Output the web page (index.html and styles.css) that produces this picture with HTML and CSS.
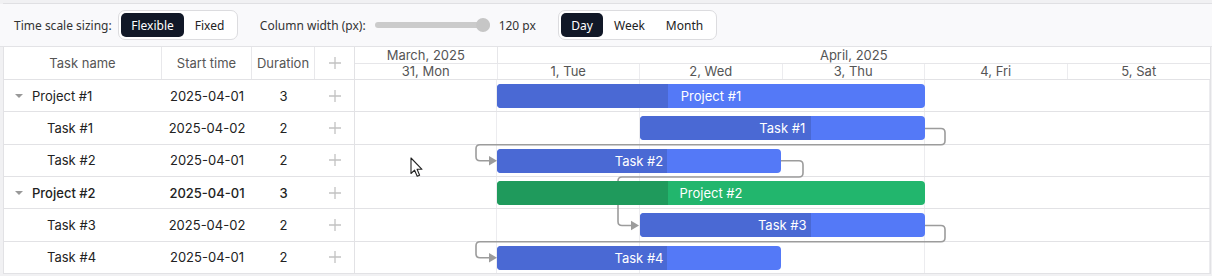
FILE: index.html
```html
<!DOCTYPE html>
<html lang="en">
<head>
  <meta charset="UTF-8" />
  <title>Gantt - time scale sizing</title>
  <link rel="stylesheet" href="styles.css">
</head>
<body>
  <div class="wrap">
    <div class="toolbar">
      <span class="label">Time scale sizing:</span>
      <div class="seg">
        <button class="on">Flexible</button>
        <button>Fixed</button>
      </div>
      <span class="label gap">Column width (px):</span>
      <div class="slider"><span class="thumb"></span></div>
      <span class="value">120 px</span>
      <div class="seg">
        <button class="on">Day</button>
        <button>Week</button>
        <button>Month</button>
      </div>
    </div>

    <div class="gantt">
      <div class="grid">
        <div class="grid-head">
          <div class="c name">Task name</div>
          <div class="c">Start time</div>
          <div class="c">Duration</div>
          <div class="c"><svg class="plus" viewBox="0 0 12 12"><path d="M6 0 V12 M0 6 H12" /></svg></div>
        </div>
        <div class="grid-row project">
          <div class="c name"><i class="caret"></i>Project #1</div>
          <div class="c">2025-04-01</div><div class="c">3</div>
          <div class="c"><svg class="plus" viewBox="0 0 12 12"><path d="M6 0 V12 M0 6 H12" /></svg></div>
        </div>
        <div class="grid-row">
          <div class="c name task">Task #1</div>
          <div class="c">2025-04-02</div><div class="c">2</div>
          <div class="c"><svg class="plus" viewBox="0 0 12 12"><path d="M6 0 V12 M0 6 H12" /></svg></div>
        </div>
        <div class="grid-row">
          <div class="c name task">Task #2</div>
          <div class="c">2025-04-01</div><div class="c">2</div>
          <div class="c"><svg class="plus" viewBox="0 0 12 12"><path d="M6 0 V12 M0 6 H12" /></svg></div>
        </div>
        <div class="grid-row project bold">
          <div class="c name"><i class="caret"></i>Project #2</div>
          <div class="c">2025-04-01</div><div class="c">3</div>
          <div class="c"><svg class="plus" viewBox="0 0 12 12"><path d="M6 0 V12 M0 6 H12" /></svg></div>
        </div>
        <div class="grid-row">
          <div class="c name task">Task #3</div>
          <div class="c">2025-04-02</div><div class="c">2</div>
          <div class="c"><svg class="plus" viewBox="0 0 12 12"><path d="M6 0 V12 M0 6 H12" /></svg></div>
        </div>
        <div class="grid-row">
          <div class="c name task">Task #4</div>
          <div class="c">2025-04-01</div><div class="c">2</div>
          <div class="c"><svg class="plus" viewBox="0 0 12 12"><path d="M6 0 V12 M0 6 H12" /></svg></div>
        </div>
      </div>

      <div class="chart">
        <div class="scale months">
          <div class="m" style="grid-column: span 1">March, 2025</div>
          <div class="m" style="grid-column: span 5">April, 2025</div>
        </div>
        <div class="scale days">
          <div>31, Mon</div><div>1, Tue</div><div>2, Wed</div>
          <div>3, Thu</div><div>4, Fri</div><div>5, Sat</div>
        </div>
        <div class="body">
          <div class="rows">
            <div></div><div></div><div></div><div></div><div></div><div></div>
          </div>
          <svg class="links" width="855" height="194" viewBox="0 0 855 194">
            <g fill="none" stroke="#9c9c9c" stroke-width="1.6">
              <path d="M570 48.5 H586 Q590 48.5 590 52.5 V60.7 Q590 64.7 586 64.7 H125 Q121 64.7 121 68.7 V76.8 Q121 80.8 125 80.8 H135" />
              <path d="M426 80.8 H444 Q448 80.8 448 84.8 V93 Q448 97 444 97 H267 Q263 97 263 101 V141.5 Q263 145.5 267 145.5 H277" />
              <path d="M570 145.5 H586 Q590 145.5 590 149.5 V157.7 Q590 161.7 586 161.7 H125 Q121 161.7 121 165.7 V173.8 Q121 177.8 125 177.8 H135" />
            </g>
            <g fill="#9c9c9c">
              <path d="M134 76 L142 80.8 L134 85.6 Z" />
              <path d="M276 140.7 L284 145.5 L276 150.3 Z" />
              <path d="M134 173 L142 177.8 L134 182.6 Z" />
            </g>
          </svg>
          <div class="bar" style="left:142px; top:4px; width:428px">
            <span class="done" style="width:40%"></span><b>Project #1</b>
          </div>
          <div class="bar" style="left:284.5px; top:36.3px; width:285.5px">
            <span class="done" style="width:60%"></span><b>Task #1</b>
          </div>
          <div class="bar" style="left:142px; top:68.7px; width:284px">
            <span class="done" style="width:60%"></span><b>Task #2</b>
          </div>
          <div class="bar green" style="left:142px; top:101px; width:428px">
            <span class="done" style="width:40%"></span><b>Project #2</b>
          </div>
          <div class="bar" style="left:284.5px; top:133.3px; width:285.5px">
            <span class="done" style="width:60%"></span><b>Task #3</b>
          </div>
          <div class="bar" style="left:142px; top:165.7px; width:284px">
            <span class="done" style="width:60%"></span><b>Task #4</b>
          </div>
        </div>
      </div>
    </div>
  </div>

  <svg class="cursor" width="14" height="21" viewBox="0 0 14 21">
    <path d="M1 1 V16.5 L4.6 13.2 L7.2 19.2 L9.6 18.2 L7.1 12.3 H12 Z" fill="#fff" stroke="#222" stroke-width="1.1" stroke-linejoin="round" />
  </svg>
</body>
</html>
```

FILE: styles.css
```css
body { margin: 0; background: #f1f1f3; font-family: Inter, "Noto Sans", sans-serif; font-size: 13px; color: #222; }
.wrap { margin: 3px 0 0 3px; border-top: 1px solid #e0e0e3; position: relative; }

.toolbar { height: 42px; display: flex; align-items: center; background: #f9f9fb; border-bottom: 1px solid #e3e3e6; margin-left: -3px; padding-left: 14px; font-family: "Noto Sans", sans-serif; font-size: 12px; }
.label { color: #333; margin-right: 6px; }
.label.gap { margin-left: 22px; margin-right: 9px; }
.seg { display: flex; padding: 2px; border: 1px solid #dcdcdf; border-radius: 7px; background: #fff; }
.seg button { font: inherit; color: #222; background: none; border: 0; height: 24px; padding: 0 10.5px; border-radius: 5px; }
.seg button.on { background: #111827; color: #fff; }
.slider { width: 115px; height: 6px; border-radius: 3px; background: #cbcbcb; position: relative; }
.thumb { position: absolute; right: 0; top: -4px; width: 14px; height: 14px; border-radius: 50%; background: #c6c6c6; }
.value { margin: 0 22px 0 9px; color: #333; }

.gantt { display: flex; background: #fff; border-left: 1px solid #e2e2e5; width: 1207px; }
.grid { width: 350px; border-right: 1px solid #e2e2e5; }
.grid-head, .grid-row { display: grid; grid-template-columns: 158px 90px 63px 39px; }
.grid-head { height: 33px; border-bottom: 1px solid #e2e2e5; box-sizing: border-box; color: #555; }
.grid-head .c { border-right: 1px solid #e8e8eb; }
.grid-head .c:last-child { border-right: 0; }
.grid-row { height: 32.33px; box-sizing: border-box; border-bottom: 1px solid #e2e2e5; }
.c { display: flex; align-items: center; justify-content: center; }
.c.name { justify-content: flex-start; }
.grid-head .c.name { justify-content: center; }
.c.task { padding-left: 43px; }
.project .c.name { padding-left: 11px; }
.bold { font-weight: 500; }
.caret { width: 0; height: 0; border-left: 4px solid transparent; border-right: 4px solid transparent; border-top: 4px solid #999; margin-right: 9px; }
.plus { width: 12px; height: 12px; fill: none; stroke: #c2c2c2; stroke-width: 1.3; }

.chart { width: 855px; border-right: 1px solid #e2e2e5; }
.scale { display: grid; grid-template-columns: repeat(6, 142.5px); color: #555; text-align: center; }
.months { height: 17px; border-bottom: 1px solid #e6e6e9; box-sizing: border-box; line-height: 16px; }
.months .m { border-right: 1px solid #e6e6e9; }
.months .m:last-child { border-right: 0; }
.days { height: 16px; border-bottom: 1px solid #e2e2e5; box-sizing: border-box; line-height: 15px; }
.days div { border-right: 1px solid #ececef; }
.days div:last-child { border-right: 0; }

.body { position: relative; height: 194px; }
.rows div { height: 32.33px; box-sizing: border-box; border-bottom: 1px solid #e2e2e5; }
.rows { background-image: repeating-linear-gradient(to right, transparent 0 141.5px, #ececef 141.5px 142.5px); }
.links { position: absolute; left: 0; top: 0; }
.bar { position: absolute; height: 24px; border-radius: 4px; background: #5479f7; overflow: hidden; display: flex; align-items: center; justify-content: center; color: #fff; }
.bar .done { position: absolute; left: 0; top: 0; bottom: 0; background: #4a69d4; }
.bar b { position: relative; font-weight: 400; }
.bar.green { background: #22b66d; }
.bar.green .done { background: #1f9a5c; }

.cursor { position: absolute; left: 410px; top: 157px; }
```
